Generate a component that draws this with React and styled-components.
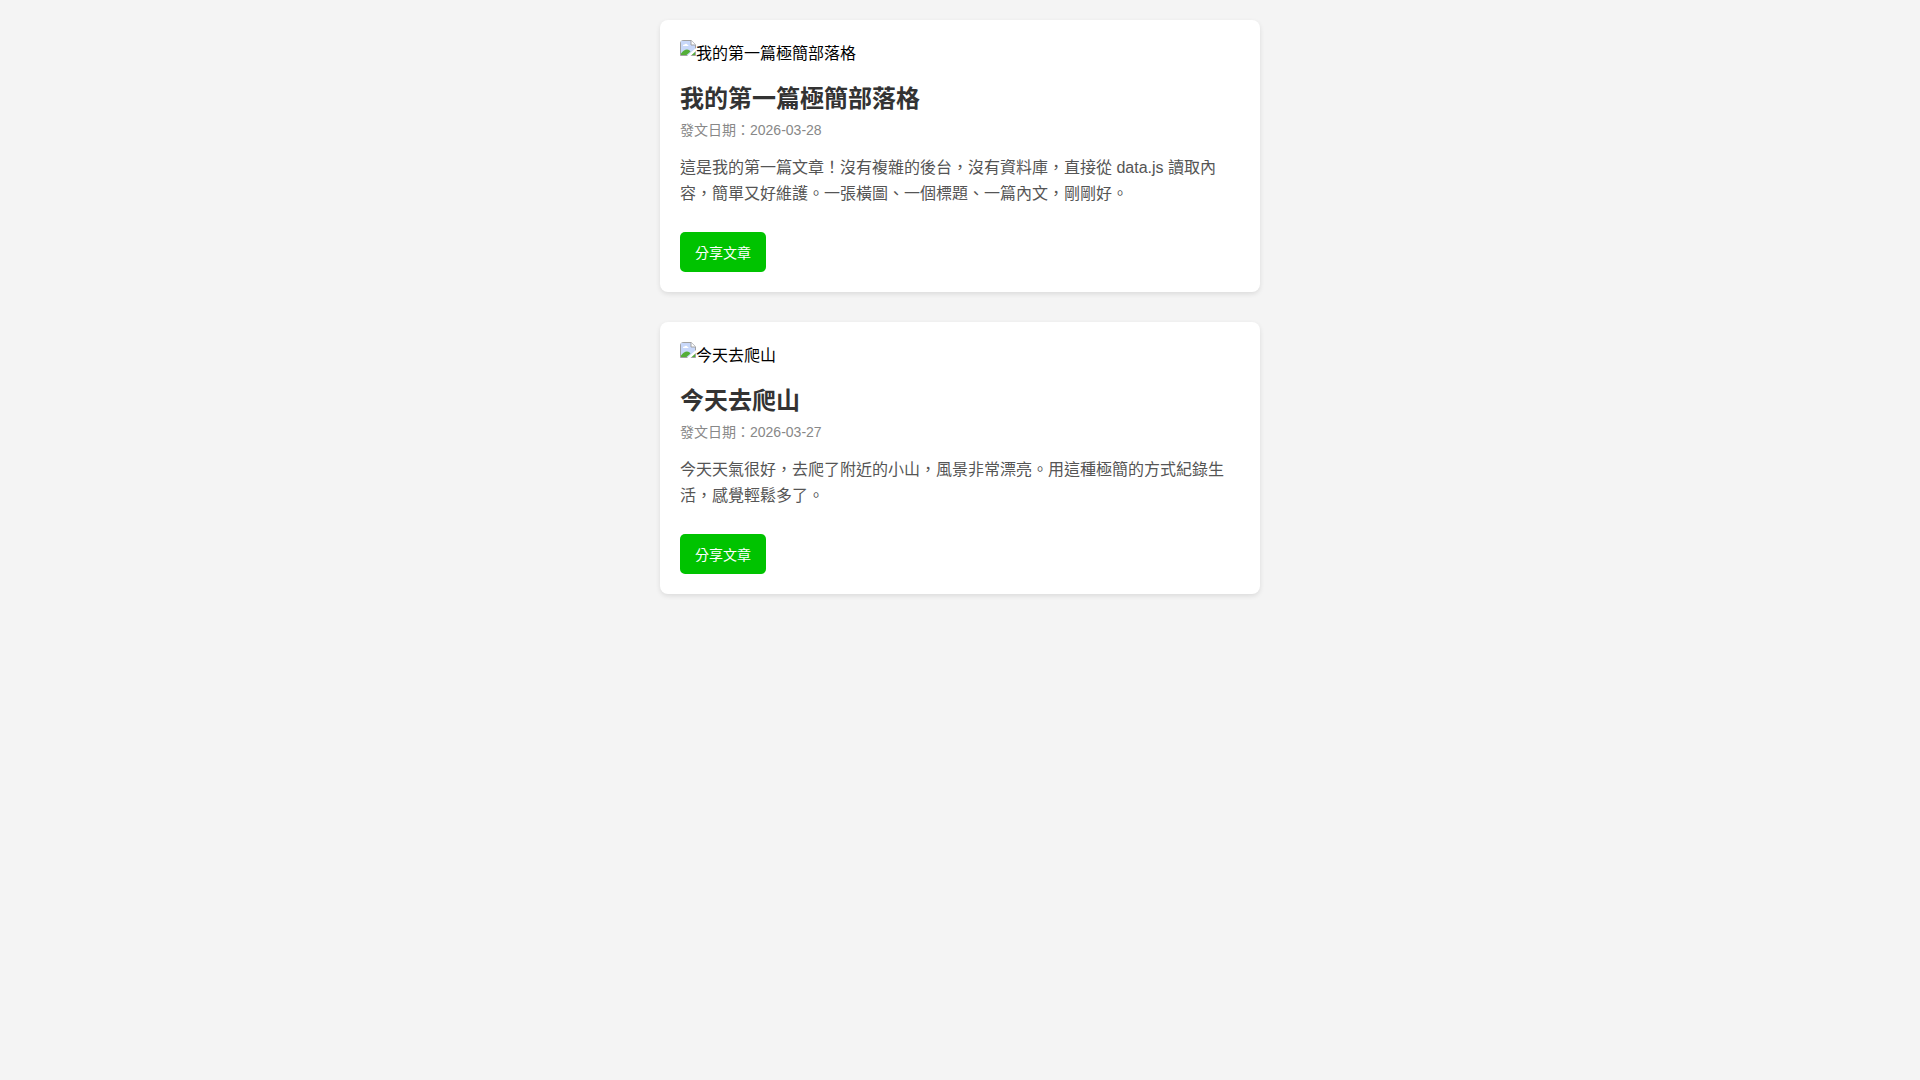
import React from 'react';
import styled, { createGlobalStyle } from 'styled-components';

const GlobalStyle = createGlobalStyle`
  body {
    margin: 0;
    padding: 20px;
    background-color: #f4f4f4;
    font-family: 'Liberation Sans', 'Noto Sans CJK TC', sans-serif;
  }
`;

const PostsContainer = styled.main`
  display: flex;
  flex-direction: column;
  gap: 30px;
  max-width: 600px;
  margin: 0 auto;
`;

const PostCard = styled.article`
  background: #fff;
  border-radius: 8px;
  box-shadow: 0 2px 5px rgba(0, 0, 0, 0.1);
  padding: 20px;
`;

const PostCover = styled.div`
  display: flex;
  align-items: flex-start;
  border-radius: 4px;
  overflow: hidden;
  margin-bottom: 13px;
  font-size: 16px;
  line-height: 28px;
  color: #000;
`;

const PostTitle = styled.h2`
  font-size: 24px;
  line-height: 35px;
  color: #333;
  margin: 0 0 4px;
`;

const PostDate = styled.div`
  font-size: 14px;
  line-height: 20px;
  color: #888;
  margin-bottom: 15px;
`;

const PostContent = styled.p`
  font-size: 16px;
  line-height: 26px;
  color: #555;
  margin: 0 0 25px;
`;

const ShareButton = styled.button`
  display: block;
  background-color: #00c300;
  color: white;
  border: none;
  border-radius: 5px;
  padding: 11px 15px 9px;
  font-family: inherit;
  font-size: 14px;
  line-height: 20px;
  cursor: pointer;
`;

const posts = [
  {
    id: 1,
    title: '我的第一篇極簡部落格',
    date: '2026-03-28',
    content:
      '這是我的第一篇文章！沒有複雜的後台，沒有資料庫，直接從 data.js 讀取內容，簡單又好維護。一張橫圖、一個標題、一篇內文，剛剛好。',
  },
  {
    id: 2,
    title: '今天去爬山',
    date: '2026-03-27',
    content: '今天天氣很好，去爬了附近的小山，風景非常漂亮。用這種極簡的方式紀錄生活，感覺輕鬆多了。',
  },
];

function MissingImageIcon() {
  return (
    <svg width="16" height="16" viewBox="0 0 16 16" aria-hidden="true">
      <path d="M.5.5h10.700l4.300 4.300v10.700H.5z" fill="#c8d8fa" stroke="#a2a2a2" />
      <path d="M3 6c0-1 .8-1.600 1.600-1.400C5 3.300 7 3.400 7.200 4.700c1 0 1.300.6 1.300 1.300z" fill="#fff" />
      <path d="M1 15v-1.500C3 11 5 9.500 7 9.500c1.500 0 2.700.8 3.500 2L6.500 15z" fill="#54ae38" />
      <path d="M10.500 15l4.500-3.500V15z" fill="#54ae38" />
      <path d="M7 16L16 8v3l-5.500 5z" fill="#fff" />
      <path d="M11 .5V5h4.500" fill="#fff" stroke="#a2a2a2" />
      <path d="M11.700 0H16v4.300z" fill="#fff" />
    </svg>
  );
}

export default function App() {
  return (
    <>
      <GlobalStyle />
      <PostsContainer lang="zh-TW">
        {posts.map(post => (
          <PostCard key={post.id}>
            <PostCover>
              <MissingImageIcon />
              <span>{post.title}</span>
            </PostCover>
            <PostTitle>{post.title}</PostTitle>
            <PostDate>發文日期：{post.date}</PostDate>
            <PostContent>{post.content}</PostContent>
            <ShareButton type="button">分享文章</ShareButton>
          </PostCard>
        ))}
      </PostsContainer>
    </>
  );
}
